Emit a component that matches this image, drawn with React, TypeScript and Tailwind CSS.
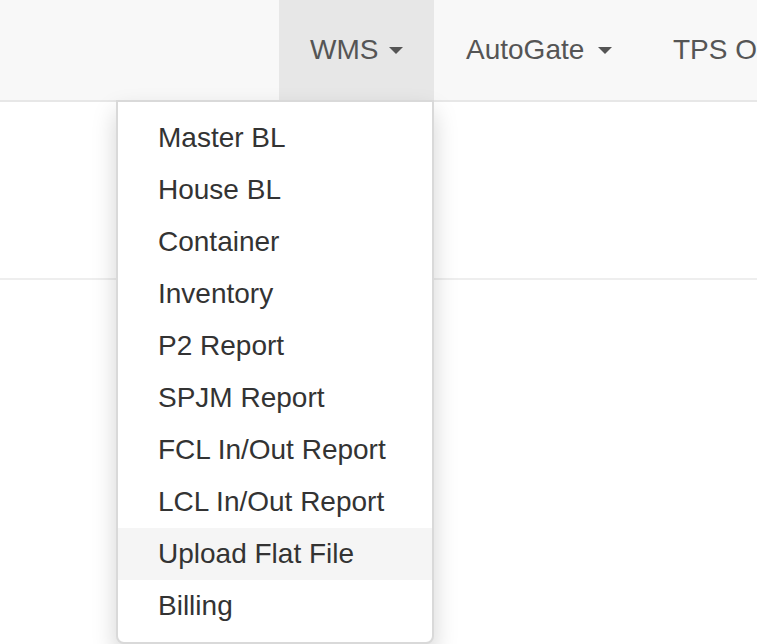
import React from "react";

const items = [
  "Master BL",
  "House BL",
  "Container",
  "Inventory",
  "P2 Report",
  "SPJM Report",
  "FCL In/Out Report",
  "LCL In/Out Report",
  "Upload Flat File",
  "Billing",
];

function Caret() {
  return (
    <span className="inline-block h-0 w-0 border-x-[7.5px] border-t-[7.5px] border-x-transparent border-t-[#555]" />
  );
}

export default function App() {
  return (
    <div
      className="relative h-[644px] w-[757px] overflow-hidden bg-white text-[28px] text-[#333]"
      style={{ fontFamily: '"Liberation Sans", Arial, sans-serif' }}
    >
      <nav className="flex h-[102px] border-b-2 border-[#e7e7e7] bg-[#f8f8f8]">
        <ul className="ml-[279px] flex shrink-0 whitespace-nowrap leading-[40px] text-[#555]">
          <li className="relative w-[155px] shrink-0">
            <a className="flex h-[100px] items-center bg-[#e7e7e7] pl-[31px]">
              <span className="inline-block w-[79px]">WMS</span>
              <Caret />
            </a>
            <ul className="absolute right-0 top-[100px] z-10 w-[318px] rounded-b-[8px] border-2 border-[rgba(0,0,0,0.15)] bg-white py-[10px] text-[#333] shadow-[0_12px_24px_rgba(0,0,0,0.175)]">
              {items.map((t) => (
                <li key={t}>
                  <a
                    className={
                      "block px-[40px] py-[6px] leading-[40px] " +
                      (t === "Upload Flat File" ? "bg-[#f5f5f5]" : "")
                    }
                  >
                    {t}
                  </a>
                </li>
              ))}
            </ul>
          </li>
          <li className="w-[208px] shrink-0">
            <a className="flex h-[100px] items-center pl-[32px]">
              <span className="inline-block w-[132px]">AutoGate</span>
              <Caret />
            </a>
          </li>
          <li className="shrink-0">
            <a className="flex h-[100px] items-center pl-[31px] pr-[30px]">TPS Online</a>
          </li>
        </ul>
      </nav>
      <div className="h-[178px] border-b-2 border-[#eeeeee]" />
    </div>
  );
}
